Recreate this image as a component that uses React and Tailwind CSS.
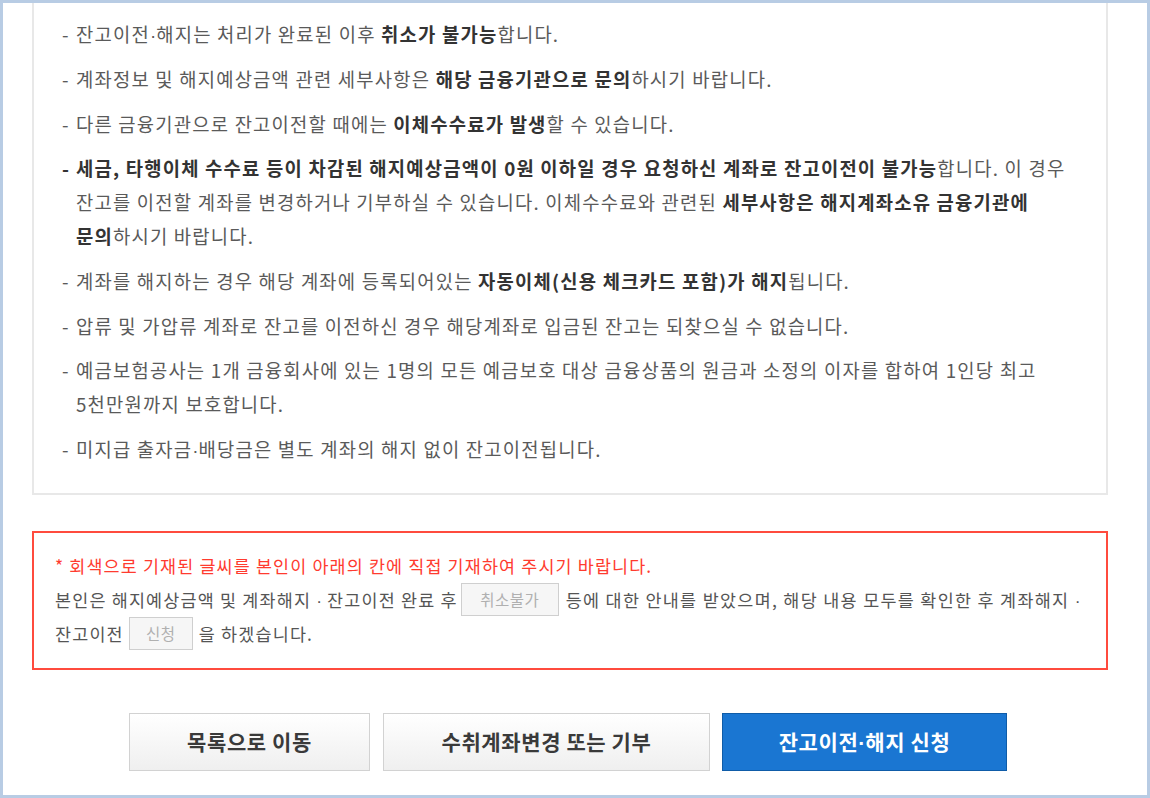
import React from "react";

const B = ({ children }) => <b className="font-bold text-[#333]">{children}</b>;
const Dot = () => (
  <span className="inline-block leading-none font-['Liberation_Sans',sans-serif] tracking-normal">·</span>
);

function Item({ children }) {
  return (
    <li className="flex leading-[33.8px]">
      <span className="w-[14px] shrink-0">-</span>
      <span className="whitespace-nowrap tracking-[1.2px]">{children}</span>
    </li>
  );
}

function Field({ text, w, m }) {
  return (
    <span
      className={`flex items-center justify-center h-[33px] border border-[#cfcfcf] bg-[#f6f6f6] text-[#b0b0b0] text-[15.5px] tracking-[0.5px] ${w} ${m}`}
    >
      {text}
    </span>
  );
}

export default function App() {
  return (
    <div className="w-[1150px] h-[798px] border-[3px] border-[#b8cce4] bg-white overflow-hidden flex flex-col pl-[29px] pr-[39px] font-['Noto_Sans_CJK_KR','Noto_Sans',sans-serif]">
      <div className="border-2 border-t-0 border-[#e8e8e8] pt-[14px] pb-[27px] pl-[28px] text-[18.8px] text-[#5a5a5a]">
        <ul className="flex flex-col gap-[11px]">
          <Item>
            잔고이전<Dot />해지는 처리가 완료된 이후 <B>취소가 불가능</B>합니다.
          </Item>
          <Item>
            계좌정보 및 해지예상금액 관련 세부사항은 <B>해당 금융기관으로 문의</B>하시기 바랍니다.
          </Item>
          <Item>
            다른 금융기관으로 잔고이전할 때에는 <B>이체수수료가 발생</B>할 수 있습니다.
          </Item>
          <li className="flex leading-[33.8px]">
            <span className="w-[14px] shrink-0 font-bold text-[#333]">-</span>
            <span className="whitespace-nowrap tracking-[1.2px]">
              <B>세금, 타행이체 수수료 등이 차감된 해지예상금액이 0원 이하일 경우 요청하신 계좌로 잔고이전이 불가능</B>합니다. 이 경우
              <br />
              잔고를 이전할 계좌를 변경하거나 기부하실 수 있습니다. 이체수수료와 관련된 <B>세부사항은 해지계좌소유 금융기관에</B>
              <br />
              <B>문의</B>하시기 바랍니다.
            </span>
          </li>
          <Item>
            계좌를 해지하는 경우 해당 계좌에 등록되어있는 <B>자동이체(신용 체크카드 포함)가 해지</B>됩니다.
          </Item>
          <Item>압류 및 가압류 계좌로 잔고를 이전하신 경우 해당계좌로 입금된 잔고는 되찾으실 수 없습니다.</Item>
          <Item>
            예금보험공사는 1개 금융회사에 있는 1명의 모든 예금보호 대상 금융상품의 원금과 소정의 이자를 합하여 1인당 최고
            <br />
            5천만원까지 보호합니다.
          </Item>
          <Item>
            미지급 출자금<Dot />배당금은 별도 계좌의 해지 없이 잔고이전됩니다.
          </Item>
        </ul>
      </div>

      <div className="mt-[36px] border-2 border-[#ff4b3e] pt-[16px] pb-[17px] pl-[21px] text-[17.4px] text-[#555] whitespace-nowrap tracking-[1.2px]">
        <div className="h-[34px] flex items-center text-[#ff3b2f] tracking-[1.15px]">
          * 회색으로 기재된 글씨를 본인이 아래의 칸에 직접 기재하여 주시기 바랍니다.
        </div>
        <div className="h-[34px] flex items-center">
          <span>
            본인은 해지예상금액 및 계좌해지 <Dot /> 잔고이전 완료 후
          </span>
          <Field text="취소불가" w="w-[98px]" m="ml-[3px] mr-[7px]" />
          <span className="tracking-[1.33px]">
            등에 대한 안내를 받았으며, 해당 내용 모두를 확인한 후 계좌해지 <Dot />
          </span>
        </div>
        <div className="h-[34px] flex items-center">
          <span>잔고이전</span>
          <Field text="신청" w="w-[64px]" m="ml-[5px] mr-[6px]" />
          <span>을 하겠습니다.</span>
        </div>
      </div>

      <div className="mt-[43px] flex text-[21px] tracking-[0.6px] font-bold">
        <button className="ml-[97px] w-[241px] h-[58px] border border-[#d2d2d2] bg-gradient-to-b from-white to-[#efefef] text-[#3a3a3a]">
          목록으로 이동
        </button>
        <button className="ml-[13px] w-[327px] h-[58px] border border-[#d2d2d2] bg-gradient-to-b from-white to-[#efefef] text-[#3a3a3a]">
          수취계좌변경 또는 기부
        </button>
        <button className="ml-[12px] w-[285px] h-[58px] border border-[#0f5ca8] bg-[#1a76d2] text-white">
          잔고이전<Dot />해지 신청
        </button>
      </div>
    </div>
  );
}
